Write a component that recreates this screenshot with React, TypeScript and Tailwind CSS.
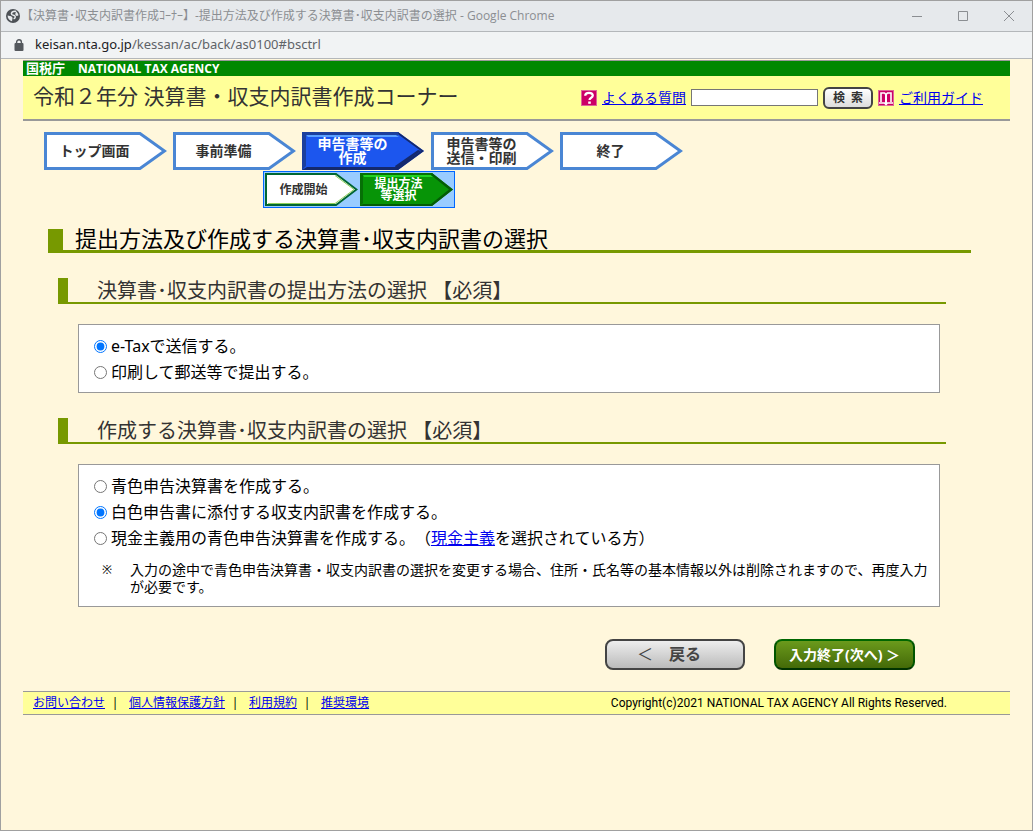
import React, { useState } from 'react'

type Step = { label: string; active?: boolean }

const steps: Step[] = [
  { label: 'トップ画面' },
  { label: '事前準備' },
  { label: '申告書等の\n作成', active: true },
  { label: '申告書等の\n送信・印刷' },
  { label: '終了' },
]

const windowControls = [
  { label: '最小化', path: 'M0 5.500H10' },
  { label: '最大化', path: 'M0.500 0.500H9.500V9.500H0.500z' },
  { label: '閉じる', path: 'M0 0L10 10M10 0L0 10' },
]

const footerLinks = ['お問い合わせ', '個人情報保護方針', '利用規約', '推奨環境']

const GlobeIcon = () => (
  <svg width="14" height="14" viewBox="0 0 14 14" aria-hidden="true">
    <circle cx="7" cy="7" r="7" fill="#4d5156" />
    <path d="M10.200 2.400C8 2.200 5.600 3 5.400 4.600c-.2 1.600 1.600 1.500 2.800 1.900 1.600.6 1.400 2.600-.6 3.400" fill="none" stroke="#e6e9ec" strokeWidth="1.500" />
    <path d="M1.600 6.500l3.600.7 1.400 1.500-.6 3.500C3.500 11.800 1.500 9.500 1.600 6.500z" fill="#e6e9ec" />
    <path d="M10 2.600c1.400.9 2.300 2.300 2.400 4l-1.800.4-1.400-1.400z" fill="#e6e9ec" />
  </svg>
)

const LockIcon = () => (
  <svg width="10" height="12" viewBox="0 0 10 12" aria-hidden="true">
    <rect x="0.500" y="4" width="9" height="8" rx="1" fill="#55595e" />
    <path d="M2.600 5V3.200a2.400 2.400 0 0 1 4.800 0V5" fill="none" stroke="#55595e" strokeWidth="1.400" />
  </svg>
)

const QuestionIcon = () => (
  <svg width="16" height="16" viewBox="0 0 16 16" aria-hidden="true">
    <rect x="0.500" y="0.500" width="15" height="15" fill="#cc0066" stroke="#dd6699" />
    <path d="M4.200 5.800C4.200 3.600 5.800 2.900 8 2.900s3.800 1 3.800 2.700c0 2.300-3.300 2-3.300 4.400" fill="none" stroke="#fff" strokeWidth="2.200" />
    <rect x="7.200" y="11.500" width="2.600" height="2.300" fill="#fff" />
  </svg>
)

const BookIcon = () => (
  <svg width="16" height="16" viewBox="0 0 16 16" aria-hidden="true">
    <rect x="0.500" y="0.500" width="15" height="15" fill="#cc0066" stroke="#dd6699" />
    <path d="M1 13H6.500L8 14.500 9.500 13H15M3 12V3H6.500L8 4.500 9.500 3H13V12" fill="none" stroke="#fff" strokeWidth="1.600" />
    <path d="M8 4.500V14" fill="none" stroke="#fff" strokeWidth="2" />
  </svg>
)

const StepArrow = ({ active }: { active?: boolean }) => (
  <svg className="[grid-area:1/1]" width="123" height="38" viewBox="0 0 123 38" aria-hidden="true">
    {active ? (
      <>
        <path d="M0 0H96L122 19 96 38H0z" fill="#1c56ee" />
        <path d="M0 0H96L98 2 94 4H4V34L0 38z" fill="#1b3f9e" />
        <path d="M4 3H94L97 5H6z" fill="#5aa0ff" />
        <path d="M0 38L5 35H94L97 33 119 19 97 3 96 0 122 19 96 38z" fill="#14296e" />
        <path d="M94 36L119 19 116 18 93 34z" fill="#14296e" />
      </>
    ) : (
      <path d="M1.500 1.500H96L120.500 19 96 36.500H1.500z" fill="#fff" stroke="#4a86d4" strokeWidth="3" />
    )}
  </svg>
)

const SubArrow = ({ active }: { active?: boolean }) => (
  <svg className="[grid-area:1/1]" width="93" height="33" viewBox="0 0 93 33" aria-hidden="true">
    {active ? (
      <>
        <path d="M0 0H72L93 16.500 72 33H0z" fill="#079407" />
        <path d="M0 0H72L73 3H3V30L0 33z" fill="#067006" />
        <path d="M3 2H71L73 4H4z" fill="#22d422" />
        <path d="M0 33L3 31H71L89 16.500 71 2 72 0 93 16.500 72 33z" fill="#045c08" />
      </>
    ) : (
      <>
        <path d="M1 1H71L91.500 16.500 71 32H1z" fill="#fff" stroke="#006633" strokeWidth="2" />
        <path d="M70 2.500L89 16.500 70 30.500H3" fill="none" stroke="#8ccf5a" />
      </>
    )}
  </svg>
)

const SectionTitle = ({ children }: { children: React.ReactNode }) => (
  <h2 className="mt-[25px] ml-[35px] mr-16 h-[26px] border-l-[10px] border-b-2 border-[#779900] pl-[29px] text-xl leading-[26px] text-[#333333]">
    {children}
  </h2>
)

type RadioProps = {
  name: string
  value: string
  current: string
  onChange: (value: string) => void
  children: React.ReactNode
}

const RadioRow = ({ name, value, current, onChange, children }: RadioProps) => (
  <div className="flex h-[26px] items-center gap-1">
    <input
      type="radio"
      id={`${name}-${value}`}
      name={name}
      checked={current === value}
      onChange={() => onChange(value)}
      className="size-[13px] shrink-0"
    />
    <label htmlFor={`${name}-${value}`} className="text-base leading-[26px]">{children}</label>
  </div>
)

export default function App() {
  const [method, setMethod] = useState('etax')
  const [form, setForm] = useState('white')
  const [keyword, setKeyword] = useState('')

  return (
    <div className="min-h-screen border border-[#a0a0a0] bg-[#fff7dc] font-['Noto_Sans','Noto_Sans_CJK_JP',sans-serif] text-black [text-spacing-trim:space-all]">
      {/* Window title bar */}
      <div className="flex h-[31px] items-center border-b border-[#b4b7ba] bg-[#e6e9ec] pl-[5px] text-xs text-[#8b8e92]">
        <GlobeIcon />
        <span className="ml-px grow whitespace-nowrap font-['Open_Sans','Noto_Sans_CJK_JP',sans-serif]">
          【決算書･収支内訳書作成ｺｰﾅｰ】-提出方法及び作成する決算書･収支内訳書の選択 - Google Chrome
        </span>
        <div className="flex items-center gap-9 pr-[18px]">
          {windowControls.map(({ label, path }) => (
            <button key={label} type="button" aria-label={label}>
              <svg width="10" height="10" viewBox="0 0 10 10" fill="none" stroke="currentColor" aria-hidden="true">
                <path d={path} />
              </svg>
            </button>
          ))}
        </div>
      </div>

      {/* Address bar */}
      <div className="flex h-[27px] items-center gap-[11px] border-b border-[#b4b7ba] bg-[#f1f3f4] pl-[13px] text-[13px] text-[#5f6368]">
        <LockIcon />
        <span>
          <span className="text-[#202124]">keisan.nta.go.jp</span>/kessan/ac/back/as0100#bsctrl
        </span>
      </div>

      <div className="mx-[22px] mt-px">
        <header>
          <p className="h-4 border-t border-[#999999] bg-[#008800] pl-[3px] text-[13px] leading-[15px] font-bold text-white">
            国税庁　<span className="font-['Open_Sans',sans-serif] text-xs">NATIONAL TAX AGENCY</span>
          </p>
          <div className="flex h-[45px] items-center justify-between border-b-2 border-[#999999] bg-[#ffff99] pr-[27px] pl-[10px]">
            <p className="pb-1 text-[21px] leading-6 text-[#333333]">令和２年分 決算書・収支内訳書作成コーナー</p>
            <form className="flex items-center gap-[5px] text-sm" onSubmit={(e) => e.preventDefault()}>
              <QuestionIcon />
              <a href="#faq" className="text-[#0000ee] underline">よくある質問</a>
              <input
                type="text"
                aria-label="検索キーワード"
                value={keyword}
                onChange={(e) => setKeyword(e.target.value)}
                className="h-[17px] w-[127px] border border-[#767676] bg-white px-1 text-xs"
              />
              <button
                type="submit"
                className="h-[22px] w-[50px] rounded-md border-2 border-[#444444] bg-linear-to-b from-white to-[#dddddd] text-xs leading-[18px] font-bold text-[#333333]"
              >
                検&ensp;索
              </button>
              <BookIcon />
              <a href="#guide" className="text-[#0000ee] underline">ご利用ガイド</a>
            </form>
          </div>
        </header>

        {/* Progress steps */}
        <nav aria-label="作成の流れ">
          <ol className="mt-[11px] ml-[21px] flex gap-[6px]">
            {steps.map((step, i) => (
              <li key={i} className="grid items-center">
                <StepArrow active={step.active} />
                <span
                  className={`[grid-area:1/1] z-10 pr-[22px] text-center text-sm leading-[14px] font-bold whitespace-pre-line ${
                    step.active ? 'text-white' : 'text-[#333333]'
                  }`}
                >
                  {step.label}
                </span>
              </li>
            ))}
          </ol>
          <ol className="mt-px ml-60 flex h-[37px] w-fit gap-0.5 border border-[#0066ff] bg-[#99ccff] p-px text-center text-xs leading-3 font-bold whitespace-pre-line">
            <li className="grid items-center">
              <SubArrow />
              <span className="[grid-area:1/1] z-10 pr-4 text-[#333333]">作成開始</span>
            </li>
            <li className="grid items-center">
              <SubArrow active />
              <span className="[grid-area:1/1] z-10 pr-4 text-white">{'提出方法\n等選択'}</span>
            </li>
          </ol>
        </nav>

        <main>
          <h1 className="mt-[21px] mr-[39px] ml-[25px] h-6 border-b-[3px] border-l-[15px] border-[#779900] pl-3 text-[22px] leading-[18px]">
            提出方法及び作成する決算書･収支内訳書の選択
          </h1>

          <SectionTitle>決算書･収支内訳書の提出方法の選択 【必須】</SectionTitle>
          <div className="mt-5 mr-[70px] ml-[55px] border border-[#999999] bg-white pt-2 pb-[7px] pl-[15px]">
            <RadioRow name="method" value="etax" current={method} onChange={setMethod}>e-Taxで送信する。</RadioRow>
            <RadioRow name="method" value="print" current={method} onChange={setMethod}>印刷して郵送等で提出する。</RadioRow>
          </div>

          <SectionTitle>作成する決算書･収支内訳書の選択 【必須】</SectionTitle>
          <div className="mt-5 mr-[70px] ml-[55px] border border-[#999999] bg-white pt-2 pb-[11px] pl-[15px]">
            <RadioRow name="form" value="blue" current={form} onChange={setForm}>青色申告決算書を作成する。</RadioRow>
            <RadioRow name="form" value="white" current={form} onChange={setForm}>白色申告書に添付する収支内訳書を作成する。</RadioRow>
            <RadioRow name="form" value="cash" current={form} onChange={setForm}>
              現金主義用の青色申告決算書を作成する。（<a href="#cash" className="text-[#0000ee] underline">現金主義</a>を選択されている方）
            </RadioRow>
            <p className="mt-[10px] flex pr-2 pl-2 text-sm leading-[17px]">
              <span className="w-7 shrink-0 text-xs leading-[17px]">※</span>
              <span>入力の途中で青色申告決算書・収支内訳書の選択を変更する場合、住所・氏名等の基本情報以外は削除されますので、再度入力が必要です。</span>
            </p>
          </div>

          <div className="mt-8 mr-[95px] flex justify-end gap-[29px]">
            <button
              type="button"
              className="h-[31px] w-[140px] rounded-lg border-2 border-[#444444] bg-linear-to-b from-[#eeeeee] to-[#bbbbbb] pr-3 text-base leading-[27px] font-bold text-[#444444]"
            >
              <span className="font-normal">＜</span>　戻る
            </button>
            <button
              type="button"
              className="h-[31px] w-[141px] rounded-lg border-2 border-t-[#006600] border-r-[#005500] border-b-[#003300] border-l-[#005500] bg-linear-to-b from-[#6b9a1c] to-[#446a08] text-sm leading-[27px] font-bold text-white"
            >
              入力終了(次へ) ＞
            </button>
          </div>
        </main>

        <footer className="mt-[21px] flex h-6 items-center justify-between border-y border-[#999999] bg-[#ffff99] pr-[63px] pl-[10px] text-xs">
          <ul className="flex">
            {footerLinks.map((text, i) => (
              <li key={text} className="flex">
                {i > 0 && <span className="w-6 pr-1 text-center">|</span>}
                <a href="#footer" className="text-[#0000ee] underline">{text}</a>
              </li>
            ))}
          </ul>
          <p className="font-['Roboto',sans-serif]">Copyright(c)2021 NATIONAL TAX AGENCY All Rights Reserved.</p>
        </footer>
      </div>
    </div>
  )
}
